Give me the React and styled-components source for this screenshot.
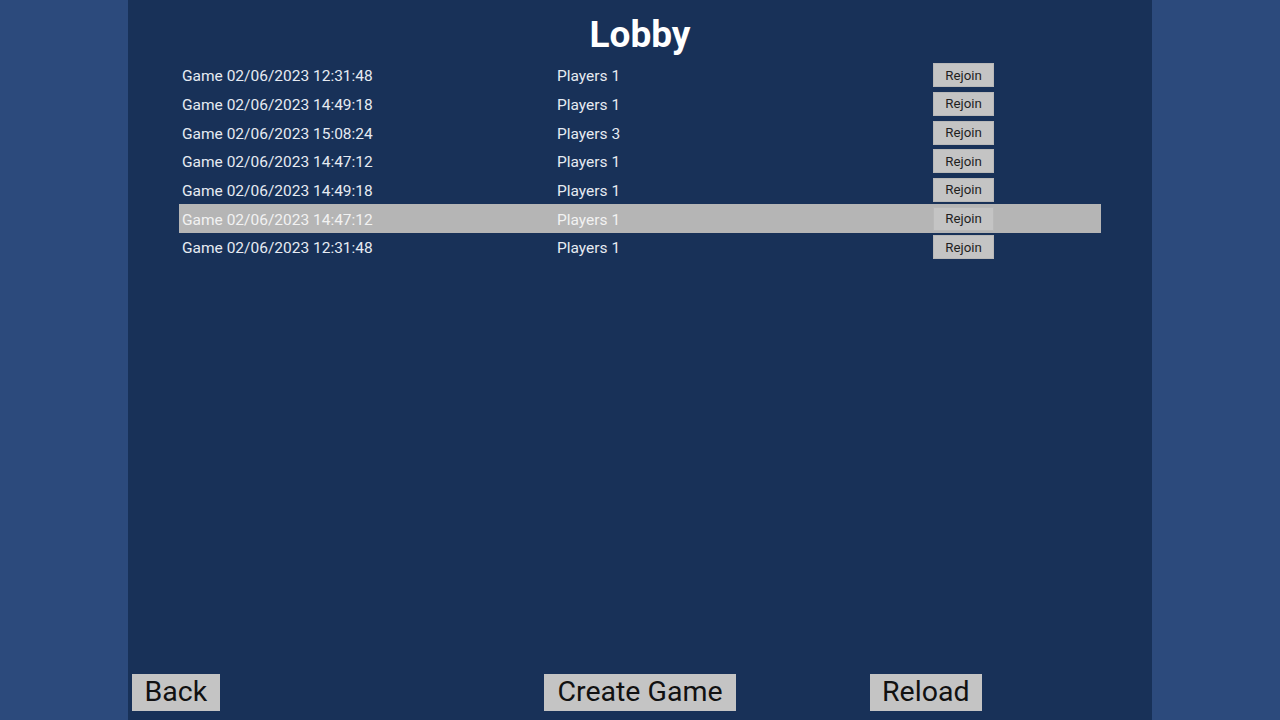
import React from "react";
import styled, { createGlobalStyle } from "styled-components";

const Global = createGlobalStyle`
  html, body { margin: 0; padding: 0; height: 100%; }
  body {
    background: #2c4a7c;
    font-family: Roboto, "Noto Sans", "Liberation Sans", sans-serif;
    overflow: hidden;
  }
`;

const Page = styled.div`
  width: 1280px;
  height: 720px;
  display: flex;
  justify-content: center;
  background: #2c4a7c;
`;

const Panel = styled.div`
  width: 1024px;
  height: 720px;
  background: #183158;
  display: flex;
  flex-direction: column;
`;

const Title = styled.h1`
  margin: 0;
  height: 61px;
  box-sizing: border-box;
  padding-top: 8px;
  display: flex;
  align-items: center;
  justify-content: center;
  font-size: 37px;
  font-weight: 700;
  color: #ffffff;
`;

const List = styled.div`
  display: flex;
  flex-direction: column;
  margin: 0 51px;
  width: 922px;
`;

const Row = styled.div`
  height: 28.67px;
  display: grid;
  grid-template-columns: 375px 376px 61px 1fr;
  align-items: center;
  padding-left: 3px;
  background: ${(p) => (p.$selected ? "#b5b5b5" : "transparent")};
  color: ${(p) => (p.$selected ? "#f2f2f2" : "#e6ebf2")};
  font-size: 15.5px;
`;

const Cell = styled.span`
  white-space: nowrap;
  padding-top: 2px;
`;

const SmallButton = styled.button`
  width: 61px;
  height: 24px;
  padding: 0;
  border: 1px solid rgba(0, 0, 0, 0.06);
  background: #c4c4c4;
  color: #1e1e1e;
  font-family: inherit;
  font-size: 13.3px;
  cursor: pointer;
`;

const BottomBar = styled.div`
  margin-top: auto;
  display: grid;
  grid-template-columns: 1fr auto 1fr;
  align-items: center;
  padding-bottom: 9px;
`;

const BigButton = styled.button`
  height: 37.5px;
  padding: 0 ${(p) => p.$pad || "12.5px"};
  border: none;
  background: #c4c4c4;
  color: #111111;
  font-family: inherit;
  font-size: 28.5px;
  line-height: 1;
  cursor: pointer;
  justify-self: ${(p) => p.$align || "center"};
  margin-left: ${(p) => p.$offset || "0"};
`;

const games = [
  ["Game 02/06/2023 12:31:48", 1],
  ["Game 02/06/2023 14:49:18", 1],
  ["Game 02/06/2023 15:08:24", 3],
  ["Game 02/06/2023 14:47:12", 1],
  ["Game 02/06/2023 14:49:18", 1],
  ["Game 02/06/2023 14:47:12", 1],
  ["Game 02/06/2023 12:31:48", 1],
];

export default function App() {
  return (
    <Page>
      <Global />
      <Panel>
        <Title>Lobby</Title>
        <List>
          {games.map(([name, players], i) => (
            <Row key={i} $selected={i === 5}>
              <Cell>{name}</Cell>
              <Cell>Players {players}</Cell>
              <SmallButton>Rejoin</SmallButton>
            </Row>
          ))}
        </List>
        <BottomBar>
          <BigButton $align="start" $offset="4px">Back</BigButton>
          <BigButton $pad="13px">Create Game</BigButton>
          <BigButton $align="start" $offset="134px" $pad="12.5px">Reload</BigButton>
        </BottomBar>
      </Panel>
    </Page>
  );
}
